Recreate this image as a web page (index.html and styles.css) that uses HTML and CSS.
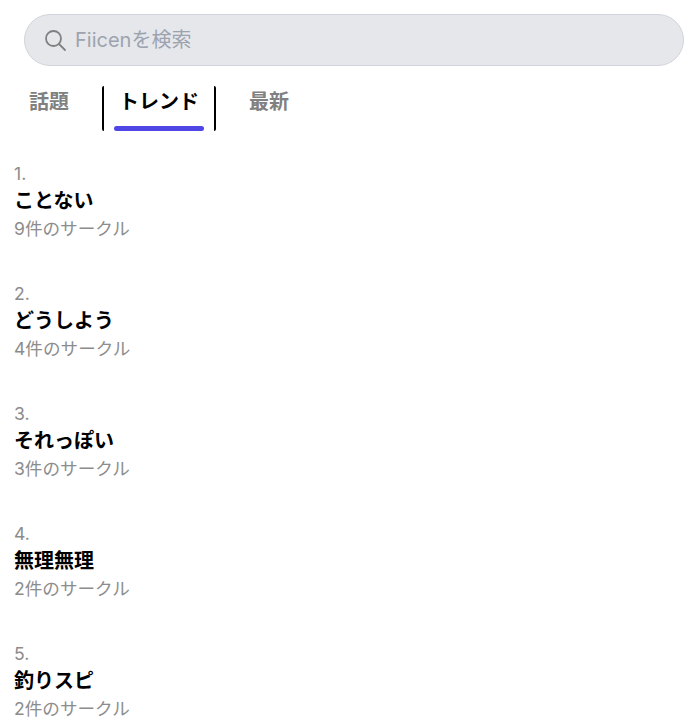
FILE: index.html
```html
<!DOCTYPE html>
<html lang="ja">
<head>
    <meta charset="UTF-8">
    <meta name="viewport" content="width=device-width, initial-scale=1.0">
    <title>Fiicen</title>
    <link rel="stylesheet" href="styles.css">
</head>
<body>
    <header class="search-wrap">
        <div class="search">
            <svg class="search-icon" viewBox="0 0 24 24" width="24" height="24" fill="none" stroke="#808080" stroke-width="1.8" stroke-linecap="round">
                <circle cx="10.5" cy="10.5" r="7.5"></circle>
                <path d="M16 16l6 6"></path>
            </svg>
            <span class="search-text">Fiicenを検索</span>
        </div>
    </header>

    <nav class="tabs">
        <a class="tab">話題</a>
        <a class="tab tab-active">トレンド</a>
        <a class="tab">最新</a>
    </nav>

    <section class="trends">
        <div class="trend">
            <p class="rank">1.</p>
            <p class="word">ことない</p>
            <p class="count">9件のサークル</p>
        </div>
        <div class="trend">
            <p class="rank">2.</p>
            <p class="word">どうしよう</p>
            <p class="count">4件のサークル</p>
        </div>
        <div class="trend">
            <p class="rank">3.</p>
            <p class="word">それっぽい</p>
            <p class="count">3件のサークル</p>
        </div>
        <div class="trend">
            <p class="rank">4.</p>
            <p class="word">無理無理</p>
            <p class="count">2件のサークル</p>
        </div>
        <div class="trend">
            <p class="rank">5.</p>
            <p class="word">釣りスピ</p>
            <p class="count">2件のサークル</p>
        </div>
    </section>
</body>
</html>
```

FILE: styles.css
```css
body{
    margin: 0;
    background: white;
    font-family: Inter, "Noto Sans CJK JP", sans-serif;
    overflow: hidden;
}

p{
    margin: 0;
}

.search-wrap{
    padding: 14px 6px 0 24px;
}

.search{
    display: flex;
    align-items: center;
    height: 52px;
    box-sizing: border-box;
    padding-left: 18px;
    padding-bottom: 1px;
    background: #e5e7eb;
    border: 1px solid #d1d5db;
    border-radius: 26px;
}

.search-icon{
    flex: none;
}

.search-text{
    margin-left: 8px;
    font-size: 20px;
    line-height: 24px;
    color: #9ca3af;
}

.tabs{
    display: flex;
    height: 45px;
    margin-top: 20px;
    padding-left: 13px;
}

.tab{
    position: relative;
    box-sizing: border-box;
    height: 45px;
    padding: 0 16px;
    font-size: 20px;
    line-height: 32px;
    font-weight: 700;
    color: #808080;
}

.tab-active{
    width: 114px;
    margin: 0 17px;
    padding: 0;
    text-align: center;
    color: black;
    border-left: 2px solid black;
    border-right: 2px solid black;
    border-radius: 2px;
}

.tab-active::after{
    content: "";
    position: absolute;
    left: 10px;
    right: 10px;
    bottom: 0;
    height: 5px;
    background: #4f46e5;
    border-radius: 3px;
}

.trends{
    padding: 29px 0 0 14px;
}

.trend{
    height: 120px;
}

.rank, .count{
    font-size: 17.6px;
    line-height: 28px;
    color: #8c8c8c;
}

.word{
    margin-bottom: 1px;
    font-size: 20px;
    line-height: 26px;
    font-weight: 700;
    color: black;
}
```
